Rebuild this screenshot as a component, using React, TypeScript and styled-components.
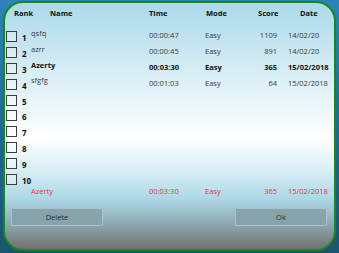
import React from "react";
import styled, { createGlobalStyle } from "styled-components";

const GlobalStyle = createGlobalStyle`
  html, body {
    margin: 0;
    padding: 0;
  }
  body {
    width: 339px;
    height: 253px;
    overflow: hidden;
    font-family: "Open Sans", "Noto Sans", sans-serif;
  }
`;

const Screen = styled.div`
  width: 339px;
  height: 253px;
  box-sizing: border-box;
  padding: 1px 3px 2px 3px;
  background: linear-gradient(180deg, #2b84b8 0%, #1e6a92 50%, #1a5470 100%);
`;

const Window = styled.div`
  height: 100%;
  box-sizing: border-box;
  border: 2px solid #168a18;
  border-radius: 20px;
  overflow: hidden;
  display: flex;
  flex-direction: column;
  background: linear-gradient(
    180deg,
    #aad9ea 0%,
    #d2ebf3 25%,
    #ffffff 55%,
    #d8eef5 68%,
    #aed9e7 79%,
    #98bcc6 86%,
    #707070 100%
  );
`;

const cols = "17px 9px 118px 56px 39px 33px 11px 1fr";

const HeaderRow = styled.div`
  display: grid;
  grid-template-columns: 9px 36px 99px 57px 52px 20px 22px 1fr;
  height: 20px;
  align-items: center;
  font-size: 7.5px;
  font-weight: 700;
  color: #111;
`;

const HeadCell = styled.span<{ $align?: string }>`
  text-align: ${({ $align }) => $align || "left"};
  white-space: nowrap;
`;

const List = styled.div`
  margin-top: 6px;
  display: flex;
  flex-direction: column;
`;

const Row = styled.div<{ $bold?: boolean }>`
  display: grid;
  grid-template-columns: ${cols};
  height: 15.8px;
  align-items: center;
  font-size: 7.5px;
  font-weight: ${({ $bold }) => ($bold ? 700 : 400)};
  color: ${({ $bold }) => ($bold ? "#111" : "#3a3a3a")};
`;

const Check = styled.span`
  width: 11px;
  height: 11px;
  margin-left: 1px;
  border: 1.4px solid #3c3c3c;
  box-sizing: border-box;
  background: rgba(255, 255, 255, 0.25);
`;

const RankNum = styled.span`
  font-size: 8px;
  font-weight: 700;
  color: #111;
  padding-top: 2px;
  white-space: nowrap;
`;

const Cell = styled.span<{ $align?: string; $raise?: boolean }>`
  text-align: ${({ $align }) => $align || "left"};
  align-self: ${({ $raise }) => ($raise ? "start" : "center")};
  padding-bottom: ${({ $raise }) => ($raise ? "0" : "2px")};
  white-space: nowrap;
  line-height: 9px;
`;

const CurrentRow = styled.div`
  display: grid;
  grid-template-columns: ${cols};
  height: 10px;
  align-items: center;
  font-size: 7.5px;
  color: #e8323d;
`;

const Buttons = styled.div`
  margin-top: 11px;
  display: flex;
  justify-content: space-between;
  padding: 0 7px 0 6px;
`;

const Button = styled.button`
  width: 92px;
  height: 18px;
  padding: 0;
  border: 1px solid #a9c2ca;
  background: #87a3ac;
  color: #222b2e;
  font-family: "Open Sans", "Noto Sans", sans-serif;
  font-size: 7.5px;
  cursor: pointer;
`;

interface Entry {
  name: string;
  time: string;
  mode: string;
  score: string;
  date: string;
  bold?: boolean;
}

const entries: Entry[] = [
  { name: "qsfq", time: "00:00:47", mode: "Easy", score: "1109", date: "14/02/20" },
  { name: "azrr", time: "00:00:45", mode: "Easy", score: "891", date: "14/02/20" },
  { name: "Azerty", time: "00:03:30", mode: "Easy", score: "365", date: "15/02/2018", bold: true },
  { name: "sfgfg", time: "00:01:03", mode: "Easy", score: "64", date: "15/02/2018" },
];

export default function App() {
  const rows = Array.from({ length: 10 }, (_, i) => entries[i]);
  return (
    <>
      <GlobalStyle />
      <Screen>
        <Window>
          <HeaderRow>
            <span />
            <HeadCell>Rank</HeadCell>
            <HeadCell>Name</HeadCell>
            <HeadCell>Time</HeadCell>
            <HeadCell>Mode</HeadCell>
            <HeadCell $align="right">Score</HeadCell>
            <span />
            <HeadCell>Date</HeadCell>
          </HeaderRow>
          <List>
            {rows.map((e, i) => (
              <Row key={i} $bold={e?.bold}>
                <Check />
                <RankNum>{i + 1}</RankNum>
                <Cell $raise>{e?.name}</Cell>
                <Cell>{e?.time}</Cell>
                <Cell>{e?.mode}</Cell>
                <Cell $align="right">{e?.score}</Cell>
                <span />
                <Cell>{e?.date}</Cell>
              </Row>
            ))}
          </List>
          <CurrentRow>
            <span />
            <span />
            <Cell>Azerty</Cell>
            <Cell>00:03:30</Cell>
            <Cell>Easy</Cell>
            <Cell $align="right">365</Cell>
            <span />
            <Cell>15/02/2018</Cell>
          </CurrentRow>
          <Buttons>
            <Button>Delete</Button>
            <Button>Ok</Button>
          </Buttons>
        </Window>
      </Screen>
    </>
  );
}
